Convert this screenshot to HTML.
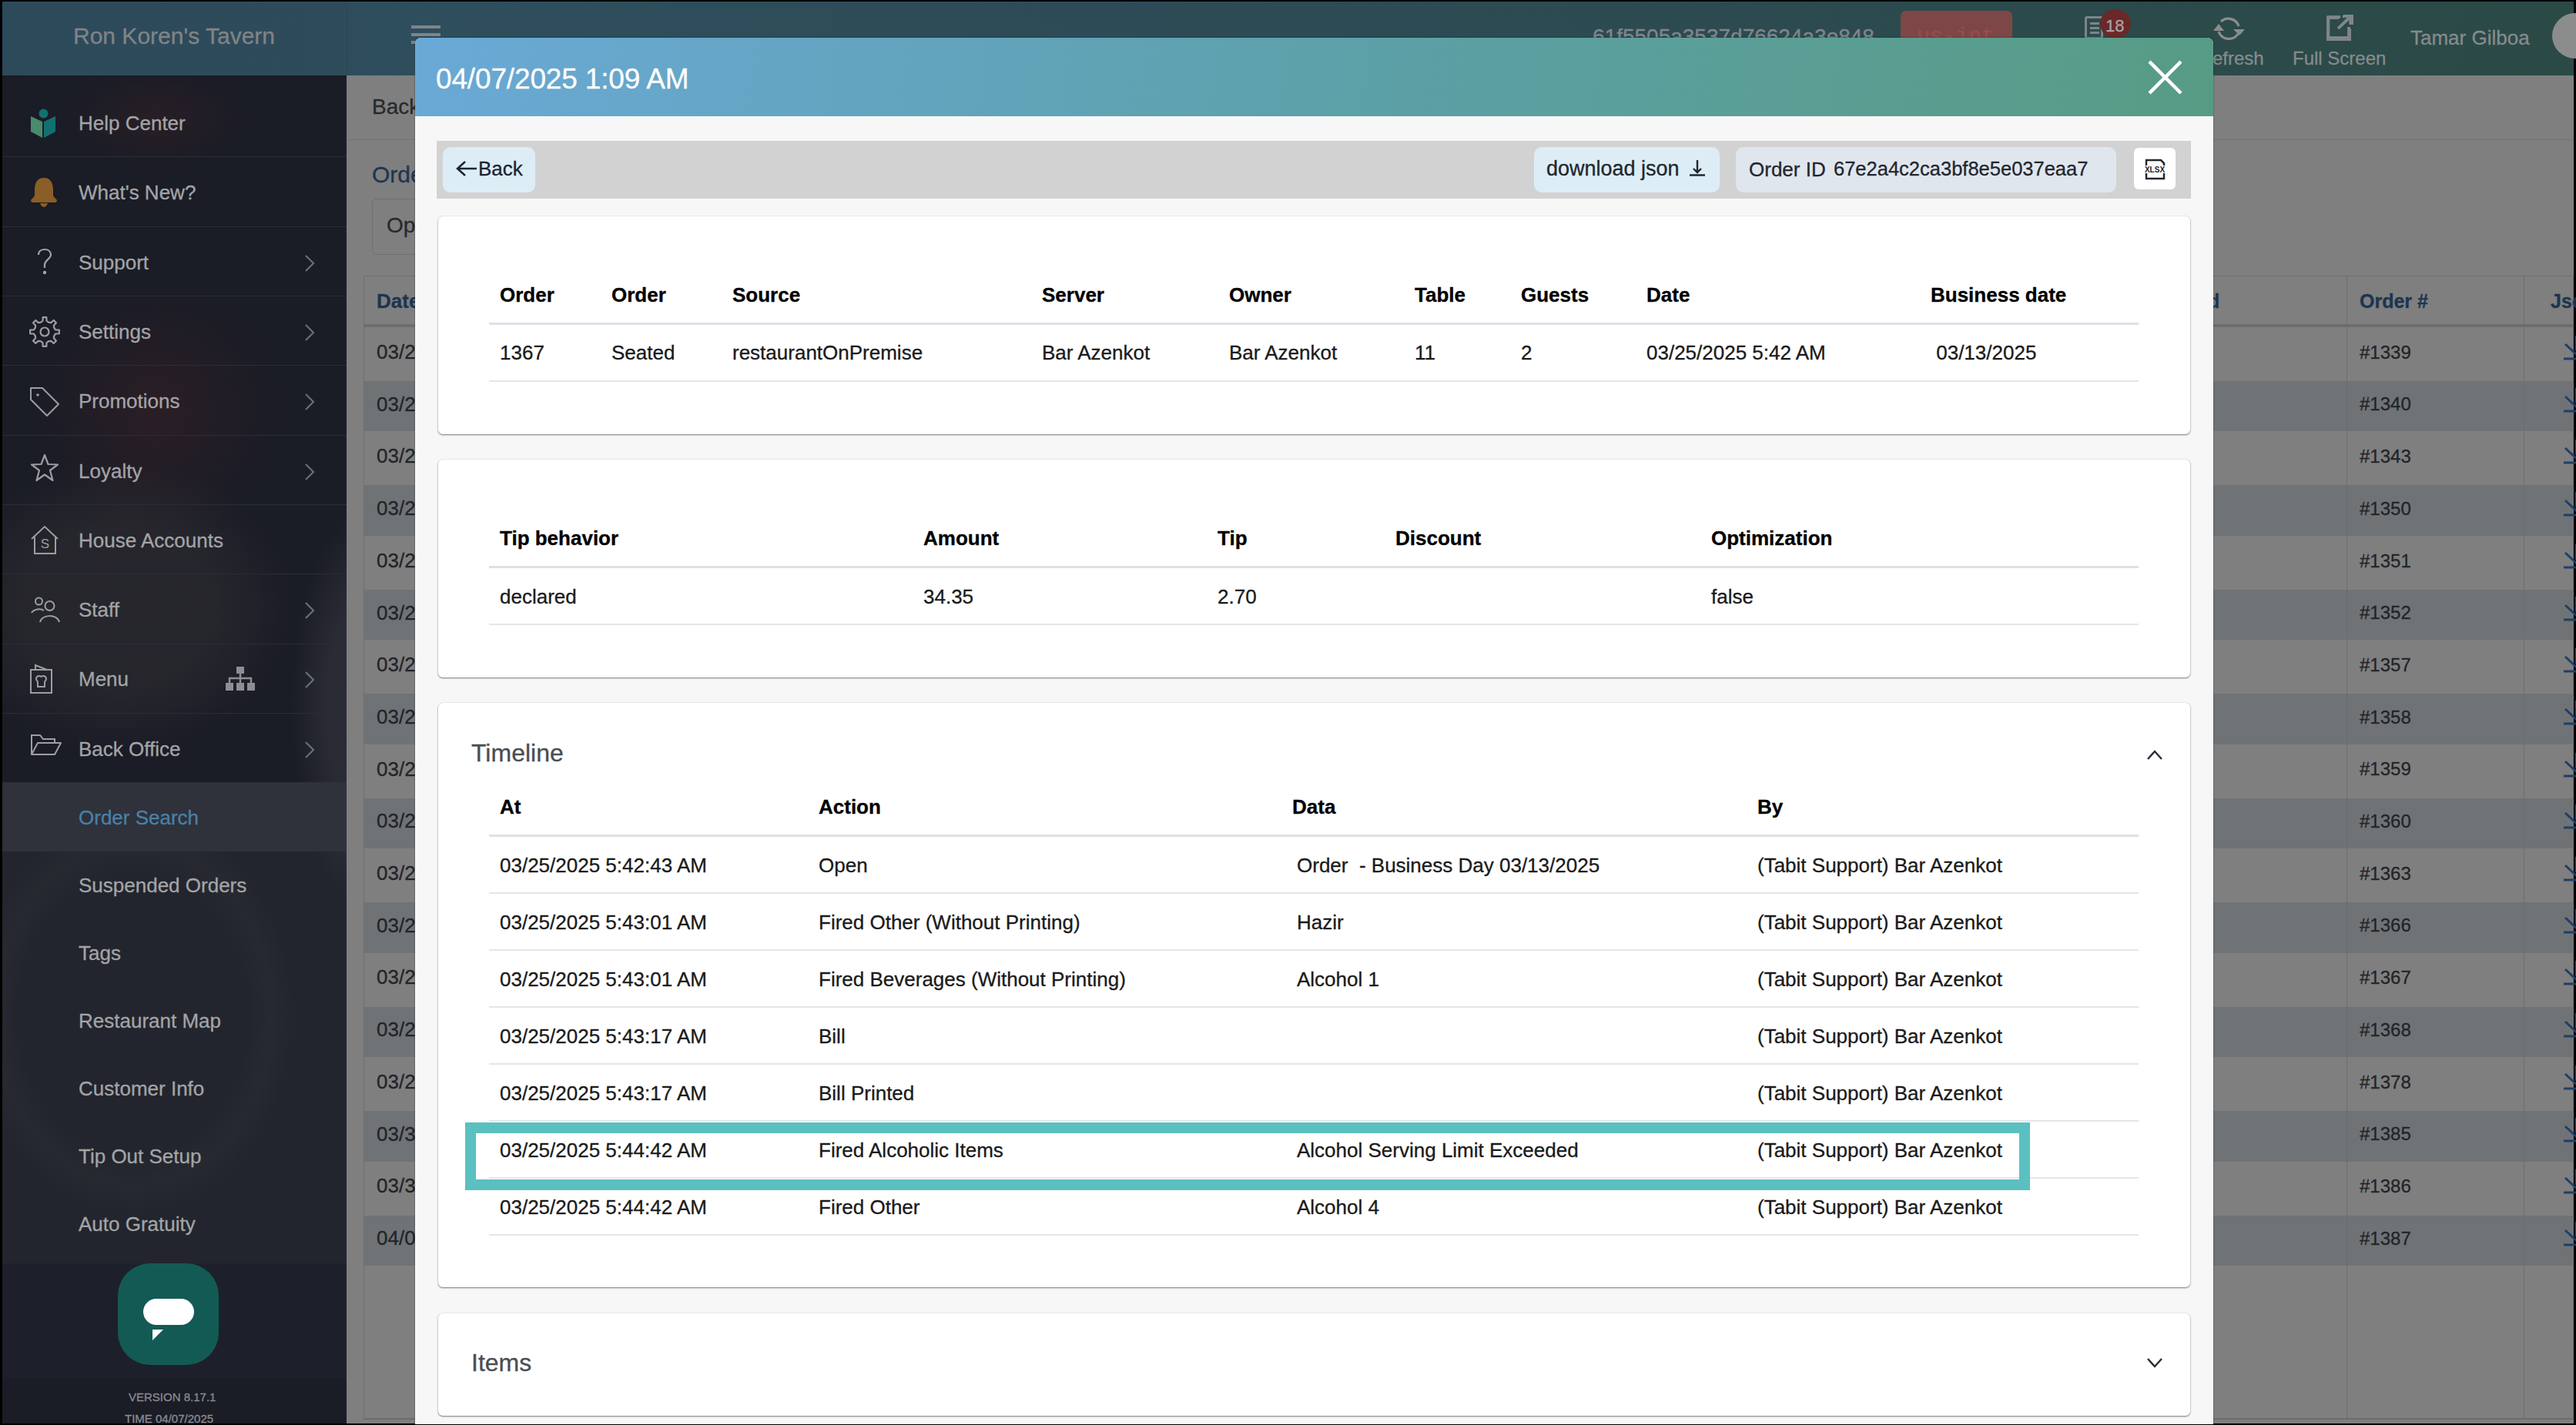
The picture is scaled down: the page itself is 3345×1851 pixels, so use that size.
<!DOCTYPE html>
<html><head><meta charset="utf-8"><style>
html,body{margin:0;padding:0;}
body{width:3345px;height:1851px;background:#000;position:relative;overflow:hidden;font-family:"Liberation Sans", sans-serif;}
.t{position:absolute;white-space:nowrap;line-height:1;-webkit-text-stroke:0.3px currentColor;}
.r{position:absolute;}
</style></head><body>
<div class="r" style="left:3px;top:2px;width:3339px;height:96px;background:linear-gradient(90deg,#2d4a5b 0%,#2e4b5c 13%,#2f4e5d 14%,#2d4b55 50%,#2b4a46 100%);"></div>
<div class="t" style="left:95px;top:32.1px;font-size:30px;color:#808486;font-weight:400;">Ron Koren's Tavern</div>
<div class="r" style="left:450px;top:2px;width:1px;height:96px;background:rgba(0,0,0,0.06);"></div>
<div class="r" style="left:534px;top:33px;width:38px;height:4px;background:#7d8488;"></div>
<div class="r" style="left:534px;top:43px;width:38px;height:4px;background:#7d8488;"></div>
<div class="r" style="left:534px;top:53px;width:38px;height:4px;background:#7d8488;"></div>
<div class="t" style="left:2068px;top:34.3px;font-size:28px;color:#80868a;font-weight:400;">61f5505a3537d76624a3e848</div>
<div class="r" style="left:2468px;top:14px;width:145px;height:60px;background:#7e4747;border-radius:7px"></div>
<div class="t" style="left:2489px;top:34.3px;font-size:28px;color:#9a4a4e;font-weight:400;letter-spacing:0px;font-family:Liberation Mono">us-int</div>
<div class="r" style="left:2707px;top:21px;width:24px;height:30px;background:transparent;border:3px solid #7d8488;border-radius:3px;box-sizing:border-box"></div>
<div class="r" style="left:2714px;top:29px;width:12px;height:3px;background:#7d8488;"></div>
<div class="r" style="left:2714px;top:35px;width:12px;height:3px;background:#7d8488;"></div>
<div class="r" style="left:2714px;top:41px;width:12px;height:3px;background:#7d8488;"></div>
<div class="r" style="left:2727px;top:12px;width:40px;height:38px;background:#6a2828;border-radius:50%"></div>
<div class="t" style="left:2734px;top:23.4px;font-size:22px;color:#a9a3a3;font-weight:400;">18</div>
<svg class="r" style="left:2870px;top:19px" width="50" height="40" viewBox="0 0 50 40"><path d="M14 9 A14 14 0 0 1 37 15" stroke="#8a8d8e" stroke-width="3.2" fill="none"/><path d="M36 25 A14 14 0 0 1 11 22" stroke="#8a8d8e" stroke-width="3.2" fill="none"/><path d="M30 19 L45 19 L38 27 Z" fill="#8a8d8e"/><path d="M4 21 L18 21 L11 12 Z" fill="#8a8d8e"/></svg>
<svg class="r" style="left:3018px;top:18px" width="40" height="36" viewBox="0 0 40 36"><path d="M21 4 H5.5 V31 H32 V17" stroke="#8a8d8e" stroke-width="3.5" fill="none"/><path d="M19 18 L33 4 M24 3.5 H34 V14" stroke="#8a8d8e" stroke-width="3" fill="none"/></svg>
<div class="t" style="left:2873px;top:63.7px;font-size:24px;color:#868b8d;font-weight:400;">efresh</div>
<svg class="r" style="left:3019px;top:18px" width="38" height="36" viewBox="0 0 38 36"><path d="M18 5 H4 V33 H32 V19" stroke="#7f8589" stroke-width="4" fill="none"/><path d="M17 19 L33 4 M24 3 H35 V14" stroke="#7f8589" stroke-width="4" fill="none"/></svg>
<div class="t" style="left:2977px;top:63.7px;font-size:24px;color:#868b8d;font-weight:400;">Full Screen</div>
<div class="t" style="left:3130px;top:35.5px;font-size:26px;color:#868b8d;font-weight:400;">Tamar Gilboa</div>
<div class="r" style="left:3314px;top:17px;width:60px;height:59px;background:#8b8d8d;border-radius:50%"></div>
<div class="r" style="left:3px;top:98px;width:447px;height:1751px;background:#1a1c26;"></div>
<div class="r" style="left:3px;top:1106px;width:447px;height:535px;background:#22252e;"></div>
<div class="r" style="left:3px;top:98px;width:447px;height:1752px;overflow:hidden"><div class="r" style="left:80px;top:-10px;width:240px;height:130px;border-radius:50%;background:radial-gradient(closest-side,rgba(75,35,35,0.30),rgba(75,35,35,0))"></div><div class="r" style="left:40px;top:270px;width:320px;height:330px;border-radius:50%;background:radial-gradient(closest-side,rgba(80,35,35,0.30),rgba(80,35,35,0))"></div><div class="r" style="left:-80px;top:500px;width:460px;height:380px;border-radius:50%;background:radial-gradient(closest-side,rgba(85,78,70,0.2) 55%,rgba(85,78,70,0))"></div><div class="r" style="left:375px;top:560px;width:200px;height:520px;border-radius:50%;background:radial-gradient(closest-side,rgba(100,100,110,0.20) 55%,rgba(100,100,110,0))"></div><div class="r" style="left:-40px;top:960px;width:420px;height:520px;border-radius:50%;background:radial-gradient(closest-side,rgba(0,0,0,0) 70%,rgba(120,110,100,0.06) 85%,rgba(0,0,0,0) 100%)"></div></div>
<div class="r" style="left:3px;top:1641px;width:447px;height:150px;background:#1d202a;"></div>
<div class="r" style="left:3px;top:1016px;width:447px;height:90px;background:#2f323a;"></div>
<div class="r" style="left:3px;top:203px;width:447px;height:1px;background:#2a2d36;"></div>
<div class="r" style="left:3px;top:294px;width:447px;height:1px;background:#2a2d36;"></div>
<div class="r" style="left:3px;top:384px;width:447px;height:1px;background:#2a2d36;"></div>
<div class="r" style="left:3px;top:474px;width:447px;height:1px;background:#2a2d36;"></div>
<div class="r" style="left:3px;top:565px;width:447px;height:1px;background:#2a2d36;"></div>
<div class="r" style="left:3px;top:655px;width:447px;height:1px;background:#2a2d36;"></div>
<div class="r" style="left:3px;top:745px;width:447px;height:1px;background:#2a2d36;"></div>
<div class="r" style="left:3px;top:836px;width:447px;height:1px;background:#2a2d36;"></div>
<div class="r" style="left:3px;top:926px;width:447px;height:1px;background:#2a2d36;"></div>
<div class="t" style="left:102px;top:147.0px;font-size:26px;color:#a3a4a6;font-weight:400;">Help Center</div>
<div class="t" style="left:102px;top:237.3px;font-size:26px;color:#a3a4a6;font-weight:400;">What's New?</div>
<div class="t" style="left:102px;top:327.6px;font-size:26px;color:#a3a4a6;font-weight:400;">Support</div>
<svg class="r" style="left:394px;top:328.6px" width="16" height="26" viewBox="0 0 16 26"><path d="M3 3 L13 13 L3 23" stroke="#66707c" stroke-width="2.2" fill="none"/></svg>
<div class="t" style="left:102px;top:417.9px;font-size:26px;color:#a3a4a6;font-weight:400;">Settings</div>
<svg class="r" style="left:394px;top:418.9px" width="16" height="26" viewBox="0 0 16 26"><path d="M3 3 L13 13 L3 23" stroke="#66707c" stroke-width="2.2" fill="none"/></svg>
<div class="t" style="left:102px;top:508.2px;font-size:26px;color:#a3a4a6;font-weight:400;">Promotions</div>
<svg class="r" style="left:394px;top:509.2px" width="16" height="26" viewBox="0 0 16 26"><path d="M3 3 L13 13 L3 23" stroke="#66707c" stroke-width="2.2" fill="none"/></svg>
<div class="t" style="left:102px;top:598.5px;font-size:26px;color:#a3a4a6;font-weight:400;">Loyalty</div>
<svg class="r" style="left:394px;top:599.5px" width="16" height="26" viewBox="0 0 16 26"><path d="M3 3 L13 13 L3 23" stroke="#66707c" stroke-width="2.2" fill="none"/></svg>
<div class="t" style="left:102px;top:688.8px;font-size:26px;color:#a3a4a6;font-weight:400;">House Accounts</div>
<div class="t" style="left:102px;top:779.1px;font-size:26px;color:#a3a4a6;font-weight:400;">Staff</div>
<svg class="r" style="left:394px;top:780.1px" width="16" height="26" viewBox="0 0 16 26"><path d="M3 3 L13 13 L3 23" stroke="#66707c" stroke-width="2.2" fill="none"/></svg>
<div class="t" style="left:102px;top:869.4px;font-size:26px;color:#a3a4a6;font-weight:400;">Menu</div>
<svg class="r" style="left:394px;top:870.4px" width="16" height="26" viewBox="0 0 16 26"><path d="M3 3 L13 13 L3 23" stroke="#66707c" stroke-width="2.2" fill="none"/></svg>
<div class="t" style="left:102px;top:959.7px;font-size:26px;color:#a3a4a6;font-weight:400;">Back Office</div>
<svg class="r" style="left:394px;top:960.7px" width="16" height="26" viewBox="0 0 16 26"><path d="M3 3 L13 13 L3 23" stroke="#66707c" stroke-width="2.2" fill="none"/></svg>
<svg class="r" style="left:38px;top:140px" width="36" height="42" viewBox="0 0 36 42"><circle cx="18.5" cy="7.5" r="6" fill="#137070"/><path d="M2 11 L17 18 V39 L2 31 Z" fill="#4a8a6f"/><path d="M19 18 L34 11 V31 L19 39 Z" fill="#137070"/></svg>
<svg class="r" style="left:38px;top:229px" width="38" height="42" viewBox="0 0 38 42"><path d="M19 2 C10 2 7 9 7 18 V24 C7 27 3 29 2 31 C2 33 3 34 5 34 H33 C35 34 36 33 36 31 C35 29 31 27 31 24 V18 C31 9 28 2 19 2 Z" fill="#8a5e26"/><path d="M14 35 H24 C23 38 21 40 19 40 C17 40 15 38 14 35 Z" fill="#8a5e26"/></svg>
<svg class="r" style="left:46px;top:322px" width="24" height="36" viewBox="0 0 24 36"><path d="M4 9 C4 4 8 2 12 2 C17 2 20 5 20 9 C20 14 12 16 12 22 V26" stroke="#a3a4a6" stroke-width="2.2" fill="none"/><circle cx="12" cy="32" r="2.2" fill="#a3a4a6"/></svg>
<svg class="r" style="left:38px;top:411px" width="40" height="40" viewBox="0 0 40 40"><polygon points="32.80,15.72 34.28,17.48 38.86,17.68 38.86,22.32 34.28,22.52 32.80,24.28 32.08,26.02 31.88,28.32 34.97,31.70 31.70,34.97 28.32,31.88 26.02,32.08 24.28,32.80 22.52,34.28 22.32,38.86 17.68,38.86 17.48,34.28 15.72,32.80 13.98,32.08 11.68,31.88 8.30,34.97 5.03,31.70 8.12,28.32 7.92,26.02 7.20,24.28 5.72,22.52 1.14,22.32 1.14,17.68 5.72,17.48 7.20,15.72 7.92,13.98 8.12,11.68 5.03,8.30 8.30,5.03 11.68,8.12 13.98,7.92 15.72,7.20 17.48,5.72 17.68,1.14 22.32,1.14 22.52,5.72 24.28,7.20 26.02,7.92 28.32,8.12 31.70,5.03 34.97,8.30 31.88,11.68 32.08,13.98" stroke="#9c9ea2" stroke-width="2.2" fill="none" stroke-linejoin="round"/><circle cx="20" cy="20" r="5.5" stroke="#9c9ea2" stroke-width="2.2" fill="none"/></svg>
<svg class="r" style="left:38px;top:501px" width="40" height="42" viewBox="0 0 40 42"><path d="M2 3 H17 L38 24 L23 39 L2 18 Z" stroke="#9c9ea2" stroke-width="2" fill="none" stroke-linejoin="round"/><circle cx="11" cy="12" r="1.8" fill="#9c9ea2"/></svg>
<svg class="r" style="left:38px;top:589px" width="40" height="38" viewBox="0 0 40 38"><polygon points="20,2 24.5,14 37,14.5 27,22 30.5,35 20,27.5 9.5,35 13,22 3,14.5 15.5,14" stroke="#9c9ea2" stroke-width="2.2" fill="none" stroke-linejoin="round"/></svg>
<svg class="r" style="left:38px;top:681px" width="42" height="42" viewBox="0 0 42 42"><path d="M3 19 L20 3 L37 19" stroke="#9c9ea2" stroke-width="2" fill="none"/><path d="M7 16 V38 H34 V16" stroke="#9c9ea2" stroke-width="2" fill="none"/><text x="20.5" y="31" font-size="17" font-family="Liberation Sans" text-anchor="middle" fill="#9c9ea2">S</text></svg>
<svg class="r" style="left:40px;top:774px" width="40" height="38" viewBox="0 0 40 38"><circle cx="10.5" cy="7" r="4.5" stroke="#9c9ea2" stroke-width="2" fill="none"/><circle cx="24.5" cy="13" r="6" stroke="#9c9ea2" stroke-width="2" fill="none"/><path d="M1 22 C4 17 13 16 17 19" stroke="#9c9ea2" stroke-width="2" fill="none"/><path d="M12 34 C14 24 34 23 37 34" stroke="#9c9ea2" stroke-width="2" fill="none"/></svg>
<svg class="r" style="left:37px;top:862px" width="34" height="42" viewBox="0 0 34 42"><path d="M3 8 H30 V38 H3 Z" stroke="#9c9ea2" stroke-width="2" fill="none"/><path d="M9 8 V2 L24 8" stroke="#9c9ea2" stroke-width="2" fill="none"/><path d="M10 20 C10 16 14 15 16.5 17 C19 15 23 16 23 20 C23 22 21 23 21 24 V30 H12 V24 C12 23 10 22 10 20 Z" stroke="#9c9ea2" stroke-width="2" fill="none"/></svg>
<svg class="r" style="left:38px;top:952px" width="44" height="32" viewBox="0 0 44 32"><path d="M3 28 V3 H14 L18 8 H33 V13" stroke="#9c9ea2" stroke-width="2" fill="none"/><path d="M3 28 L11 13 H41 L33 28 Z" stroke="#9c9ea2" stroke-width="2" fill="none" stroke-linejoin="round"/></svg>
<svg class="r" style="left:292px;top:865px" width="40" height="34" viewBox="0 0 40 34"><rect x="15" y="1" width="10" height="9" fill="#8d8f93"/><path d="M20 10 V16 M6 22 V16 H34 V22 M20 16 V22" stroke="#8d8f93" stroke-width="2.5" fill="none"/><rect x="1" y="22" width="10" height="10" fill="#8d8f93"/><rect x="15" y="22" width="10" height="10" fill="#8d8f93"/><rect x="29" y="22" width="10" height="10" fill="#8d8f93"/></svg>
<div class="t" style="left:102px;top:1049.0px;font-size:26px;color:#4a80a8;font-weight:400;">Order Search</div>
<div class="t" style="left:102px;top:1137.0px;font-size:26px;color:#a3a4a6;font-weight:400;">Suspended Orders</div>
<div class="t" style="left:102px;top:1225.0px;font-size:26px;color:#a3a4a6;font-weight:400;">Tags</div>
<div class="t" style="left:102px;top:1313.0px;font-size:26px;color:#a3a4a6;font-weight:400;">Restaurant Map</div>
<div class="t" style="left:102px;top:1401.0px;font-size:26px;color:#a3a4a6;font-weight:400;">Customer Info</div>
<div class="t" style="left:102px;top:1489.0px;font-size:26px;color:#a3a4a6;font-weight:400;">Tip Out Setup</div>
<div class="t" style="left:102px;top:1577.0px;font-size:26px;color:#a3a4a6;font-weight:400;">Auto Gratuity</div>
<div class="r" style="left:153px;top:1641px;width:131px;height:132px;background:#135a55;border-radius:42px"></div>
<div class="r" style="left:186px;top:1687px;width:66px;height:34px;background:#fff;border-radius:17px"></div>
<svg class="r" style="left:198px;top:1727px" width="14" height="14" viewBox="0 0 14 14"><path d="M0 0 H14 L0 14 Z" fill="#fff"/></svg>
<div class="t" style="left:167px;top:1807.3px;font-size:15px;color:#8a8c90;font-weight:400;">VERSION 8.17.1</div>
<div class="t" style="left:162px;top:1835.3px;font-size:15px;color:#8a8c90;font-weight:400;">TIME 04/07/2025</div>
<div class="r" style="left:450px;top:98px;width:2892px;height:1751px;background:#7f7f7f;"></div>
<div class="r" style="left:450px;top:181px;width:2892px;height:1px;background:#727272;"></div>
<div class="t" style="left:483px;top:125.3px;font-size:28px;color:#262a2e;font-weight:400;">Back</div>
<div class="t" style="left:483px;top:211.6px;font-size:30px;color:#1e3550;font-weight:400;">Order Search</div>
<div class="r" style="left:483px;top:258px;width:300px;height:71px;background:transparent;border:1px solid #6f6f6f;border-radius:6px"></div>
<div class="t" style="left:502px;top:279.3px;font-size:28px;color:#262a2e;font-weight:400;">Open</div>
<div class="r" style="left:472px;top:358px;width:2870px;height:1486px;background:transparent;border:1px solid #707070;border-bottom:2px solid #6d6d6d;box-sizing:border-box"></div>
<div class="r" style="left:472px;top:421px;width:2870px;height:4px;background:#6d6d6d;"></div>
<div class="r" style="left:473px;top:494.5px;width:2869px;height:65.5px;background:#6f7376"></div>
<div class="r" style="left:473px;top:630.0px;width:2869px;height:65.5px;background:#6f7376"></div>
<div class="r" style="left:473px;top:765.5px;width:2869px;height:65.5px;background:#6f7376"></div>
<div class="r" style="left:473px;top:901.0px;width:2869px;height:65.5px;background:#6f7376"></div>
<div class="r" style="left:473px;top:1036.5px;width:2869px;height:65.5px;background:#6f7376"></div>
<div class="r" style="left:473px;top:1172.0px;width:2869px;height:65.5px;background:#6f7376"></div>
<div class="r" style="left:473px;top:1307.5px;width:2869px;height:65.5px;background:#6f7376"></div>
<div class="r" style="left:473px;top:1443.0px;width:2869px;height:65.5px;background:#6f7376"></div>
<div class="r" style="left:473px;top:1578.5px;width:2869px;height:65.5px;background:#6f7376"></div>
<div class="t" style="left:489px;top:377.6px;font-size:26px;color:#1c3550;font-weight:700;">Date</div>
<div class="t" style="left:489px;top:444.0px;font-size:26px;color:#222428;font-weight:400;">03/25/2025</div>
<div class="t" style="left:3064px;top:445.7px;font-size:24px;color:#222428;font-weight:400;">#1339</div>
<svg class="r" style="left:3326px;top:436.0px" width="30" height="36" viewBox="0 0 30 36"><path d="M19 0 V20 M5 11 L19 24 L33 11 M3 30 H35" stroke="#1f3f66" stroke-width="3" fill="none"/></svg>
<div class="t" style="left:489px;top:511.7px;font-size:26px;color:#222428;font-weight:400;">03/25/2025</div>
<div class="t" style="left:3064px;top:513.4px;font-size:24px;color:#222428;font-weight:400;">#1340</div>
<svg class="r" style="left:3326px;top:503.7px" width="30" height="36" viewBox="0 0 30 36"><path d="M19 0 V20 M5 11 L19 24 L33 11 M3 30 H35" stroke="#1f3f66" stroke-width="3" fill="none"/></svg>
<div class="t" style="left:489px;top:579.4px;font-size:26px;color:#222428;font-weight:400;">03/25/2025</div>
<div class="t" style="left:3064px;top:581.1px;font-size:24px;color:#222428;font-weight:400;">#1343</div>
<svg class="r" style="left:3326px;top:571.4px" width="30" height="36" viewBox="0 0 30 36"><path d="M19 0 V20 M5 11 L19 24 L33 11 M3 30 H35" stroke="#1f3f66" stroke-width="3" fill="none"/></svg>
<div class="t" style="left:489px;top:647.1px;font-size:26px;color:#222428;font-weight:400;">03/25/2025</div>
<div class="t" style="left:3064px;top:648.8px;font-size:24px;color:#222428;font-weight:400;">#1350</div>
<svg class="r" style="left:3326px;top:639.1px" width="30" height="36" viewBox="0 0 30 36"><path d="M19 0 V20 M5 11 L19 24 L33 11 M3 30 H35" stroke="#1f3f66" stroke-width="3" fill="none"/></svg>
<div class="t" style="left:489px;top:714.8px;font-size:26px;color:#222428;font-weight:400;">03/25/2025</div>
<div class="t" style="left:3064px;top:716.5px;font-size:24px;color:#222428;font-weight:400;">#1351</div>
<svg class="r" style="left:3326px;top:706.8px" width="30" height="36" viewBox="0 0 30 36"><path d="M19 0 V20 M5 11 L19 24 L33 11 M3 30 H35" stroke="#1f3f66" stroke-width="3" fill="none"/></svg>
<div class="t" style="left:489px;top:782.5px;font-size:26px;color:#222428;font-weight:400;">03/25/2025</div>
<div class="t" style="left:3064px;top:784.2px;font-size:24px;color:#222428;font-weight:400;">#1352</div>
<svg class="r" style="left:3326px;top:774.5px" width="30" height="36" viewBox="0 0 30 36"><path d="M19 0 V20 M5 11 L19 24 L33 11 M3 30 H35" stroke="#1f3f66" stroke-width="3" fill="none"/></svg>
<div class="t" style="left:489px;top:850.2px;font-size:26px;color:#222428;font-weight:400;">03/25/2025</div>
<div class="t" style="left:3064px;top:851.9px;font-size:24px;color:#222428;font-weight:400;">#1357</div>
<svg class="r" style="left:3326px;top:842.2px" width="30" height="36" viewBox="0 0 30 36"><path d="M19 0 V20 M5 11 L19 24 L33 11 M3 30 H35" stroke="#1f3f66" stroke-width="3" fill="none"/></svg>
<div class="t" style="left:489px;top:917.9px;font-size:26px;color:#222428;font-weight:400;">03/25/2025</div>
<div class="t" style="left:3064px;top:919.6px;font-size:24px;color:#222428;font-weight:400;">#1358</div>
<svg class="r" style="left:3326px;top:909.9px" width="30" height="36" viewBox="0 0 30 36"><path d="M19 0 V20 M5 11 L19 24 L33 11 M3 30 H35" stroke="#1f3f66" stroke-width="3" fill="none"/></svg>
<div class="t" style="left:489px;top:985.6px;font-size:26px;color:#222428;font-weight:400;">03/25/2025</div>
<div class="t" style="left:3064px;top:987.3px;font-size:24px;color:#222428;font-weight:400;">#1359</div>
<svg class="r" style="left:3326px;top:977.6px" width="30" height="36" viewBox="0 0 30 36"><path d="M19 0 V20 M5 11 L19 24 L33 11 M3 30 H35" stroke="#1f3f66" stroke-width="3" fill="none"/></svg>
<div class="t" style="left:489px;top:1053.3px;font-size:26px;color:#222428;font-weight:400;">03/25/2025</div>
<div class="t" style="left:3064px;top:1055.0px;font-size:24px;color:#222428;font-weight:400;">#1360</div>
<svg class="r" style="left:3326px;top:1045.3px" width="30" height="36" viewBox="0 0 30 36"><path d="M19 0 V20 M5 11 L19 24 L33 11 M3 30 H35" stroke="#1f3f66" stroke-width="3" fill="none"/></svg>
<div class="t" style="left:489px;top:1121.0px;font-size:26px;color:#222428;font-weight:400;">03/25/2025</div>
<div class="t" style="left:3064px;top:1122.7px;font-size:24px;color:#222428;font-weight:400;">#1363</div>
<svg class="r" style="left:3326px;top:1113.0px" width="30" height="36" viewBox="0 0 30 36"><path d="M19 0 V20 M5 11 L19 24 L33 11 M3 30 H35" stroke="#1f3f66" stroke-width="3" fill="none"/></svg>
<div class="t" style="left:489px;top:1188.7px;font-size:26px;color:#222428;font-weight:400;">03/25/2025</div>
<div class="t" style="left:3064px;top:1190.4px;font-size:24px;color:#222428;font-weight:400;">#1366</div>
<svg class="r" style="left:3326px;top:1180.7px" width="30" height="36" viewBox="0 0 30 36"><path d="M19 0 V20 M5 11 L19 24 L33 11 M3 30 H35" stroke="#1f3f66" stroke-width="3" fill="none"/></svg>
<div class="t" style="left:489px;top:1256.4px;font-size:26px;color:#222428;font-weight:400;">03/25/2025</div>
<div class="t" style="left:3064px;top:1258.1px;font-size:24px;color:#222428;font-weight:400;">#1367</div>
<svg class="r" style="left:3326px;top:1248.4px" width="30" height="36" viewBox="0 0 30 36"><path d="M19 0 V20 M5 11 L19 24 L33 11 M3 30 H35" stroke="#1f3f66" stroke-width="3" fill="none"/></svg>
<div class="t" style="left:489px;top:1324.1px;font-size:26px;color:#222428;font-weight:400;">03/25/2025</div>
<div class="t" style="left:3064px;top:1325.8px;font-size:24px;color:#222428;font-weight:400;">#1368</div>
<svg class="r" style="left:3326px;top:1316.1px" width="30" height="36" viewBox="0 0 30 36"><path d="M19 0 V20 M5 11 L19 24 L33 11 M3 30 H35" stroke="#1f3f66" stroke-width="3" fill="none"/></svg>
<div class="t" style="left:489px;top:1391.8px;font-size:26px;color:#222428;font-weight:400;">03/25/2025</div>
<div class="t" style="left:3064px;top:1393.5px;font-size:24px;color:#222428;font-weight:400;">#1378</div>
<svg class="r" style="left:3326px;top:1383.8px" width="30" height="36" viewBox="0 0 30 36"><path d="M19 0 V20 M5 11 L19 24 L33 11 M3 30 H35" stroke="#1f3f66" stroke-width="3" fill="none"/></svg>
<div class="t" style="left:489px;top:1459.5px;font-size:26px;color:#222428;font-weight:400;">03/35/2025</div>
<div class="t" style="left:3064px;top:1461.2px;font-size:24px;color:#222428;font-weight:400;">#1385</div>
<svg class="r" style="left:3326px;top:1451.5px" width="30" height="36" viewBox="0 0 30 36"><path d="M19 0 V20 M5 11 L19 24 L33 11 M3 30 H35" stroke="#1f3f66" stroke-width="3" fill="none"/></svg>
<div class="t" style="left:489px;top:1527.2px;font-size:26px;color:#222428;font-weight:400;">03/35/2025</div>
<div class="t" style="left:3064px;top:1528.9px;font-size:24px;color:#222428;font-weight:400;">#1386</div>
<svg class="r" style="left:3326px;top:1519.2px" width="30" height="36" viewBox="0 0 30 36"><path d="M19 0 V20 M5 11 L19 24 L33 11 M3 30 H35" stroke="#1f3f66" stroke-width="3" fill="none"/></svg>
<div class="t" style="left:489px;top:1594.9px;font-size:26px;color:#222428;font-weight:400;">04/05/2025</div>
<div class="t" style="left:3064px;top:1596.6px;font-size:24px;color:#222428;font-weight:400;">#1387</div>
<svg class="r" style="left:3326px;top:1586.9px" width="30" height="36" viewBox="0 0 30 36"><path d="M19 0 V20 M5 11 L19 24 L33 11 M3 30 H35" stroke="#1f3f66" stroke-width="3" fill="none"/></svg>
<div class="r" style="left:3047px;top:358px;width:1px;height:1486px;background:#6d6d6d;"></div>
<div class="r" style="left:3277px;top:358px;width:1px;height:1486px;background:#6d6d6d;"></div>
<div class="t" style="left:3064px;top:378.8px;font-size:25px;color:#1c3550;font-weight:700;">Order #</div>
<div class="t" style="left:3312px;top:378.8px;font-size:25px;color:#1c3550;font-weight:700;">Json</div>
<div class="t" style="left:2785px;top:378.8px;font-size:25px;color:#1c3550;font-weight:700;">Order Id</div>
<div class="r" style="left:539px;top:49px;width:2335px;height:1810px;background:#f7f7f7;border-radius:8px 8px 0 0;overflow:hidden;box-shadow:0 0 2px rgba(0,0,0,0.6)">
<div class="r" style="left:0;top:0;width:2335px;height:102px;background:linear-gradient(100deg,#6aa9d6 0%,#62a4bc 30%,#5ca0a6 55%,#5a9e94 78%,#579b85 100%)"></div>
</div>
<div class="t" style="left:566px;top:83.7px;font-size:37px;color:#ffffff;font-weight:400;letter-spacing:-0.15px">04/07/2025 1:09 AM</div>
<svg class="r" style="left:2788px;top:77px" width="47" height="47" viewBox="0 0 47 47"><path d="M3 3 L44 44 M44 3 L3 44" stroke="#fff" stroke-width="4.5" fill="none"/></svg>
<div class="r" style="left:567px;top:183px;width:2278px;height:75px;background:#d3d2d3;"></div>
<div class="r" style="left:575px;top:191px;width:120px;height:59px;background:#ddedf6;border-radius:10px"></div>
<svg class="r" style="left:591px;top:207px" width="30" height="24" viewBox="0 0 30 24"><path d="M28 12 H4 M13 3 L3 12 L13 21" stroke="#1c2434" stroke-width="2.5" fill="none"/></svg>
<div class="t" style="left:621px;top:206.0px;font-size:26px;color:#1c2434;font-weight:400;">Back</div>
<div class="r" style="left:1992px;top:191px;width:241px;height:59px;background:#ddedf6;border-radius:10px"></div>
<div class="t" style="left:2008px;top:206.1px;font-size:27px;color:#22262e;font-weight:400;">download json</div>
<svg class="r" style="left:2192px;top:206px" width="24" height="26" viewBox="0 0 24 26"><path d="M12 2 V18 M7 13 L12 18 L17 13 M2 21.5 H22" stroke="#22262e" stroke-width="2.4" fill="none"/></svg>
<div class="r" style="left:2254px;top:191px;width:494px;height:59px;background:#e0e6ee;border-radius:10px"></div>
<div class="t" style="left:2271px;top:207.0px;font-size:26px;color:#22262e;font-weight:400;">Order ID</div>
<div class="t" style="left:2381px;top:207.4px;font-size:25.5px;color:#22262e;font-weight:400;">67e2a4c2ca3bf8e5e037eaa7</div>
<div class="r" style="left:2771px;top:192px;width:54px;height:54px;background:#ffffff;border-radius:6px"></div>
<svg class="r" style="left:2780px;top:203px" width="36" height="34" viewBox="0 0 36 34"><path d="M7 12 V5 H26 L30 9 V12 M7 22 V29 H30 V22" stroke="#22262e" stroke-width="2.5" fill="none"/><text x="18" y="21" font-size="10" font-family="Liberation Sans" font-weight="700" text-anchor="middle" fill="#22262e">XLSX</text></svg>
<div class="r" style="left:569px;top:281px;width:2275px;height:283px;background:#ffffff;border-radius:6px;box-shadow:0 1px 2px rgba(0,0,0,0.5),0 0 2px rgba(0,0,0,0.12)"></div>
<div class="r" style="left:569px;top:597px;width:2275px;height:283px;background:#ffffff;border-radius:6px;box-shadow:0 1px 2px rgba(0,0,0,0.5),0 0 2px rgba(0,0,0,0.12)"></div>
<div class="r" style="left:569px;top:913px;width:2275px;height:759px;background:#ffffff;border-radius:6px;box-shadow:0 1px 2px rgba(0,0,0,0.5),0 0 2px rgba(0,0,0,0.12)"></div>
<div class="r" style="left:569px;top:1706px;width:2275px;height:133px;background:#ffffff;border-radius:6px;box-shadow:0 1px 2px rgba(0,0,0,0.5),0 0 2px rgba(0,0,0,0.12)"></div>
<div class="t" style="left:649px;top:370.0px;font-size:26px;color:#000;font-weight:700;">Order</div>
<div class="t" style="left:649px;top:445.0px;font-size:26px;color:#1a1a1a;font-weight:400;">1367</div>
<div class="t" style="left:794px;top:370.0px;font-size:26px;color:#000;font-weight:700;">Order</div>
<div class="t" style="left:794px;top:445.0px;font-size:26px;color:#1a1a1a;font-weight:400;">Seated</div>
<div class="t" style="left:951px;top:370.0px;font-size:26px;color:#000;font-weight:700;">Source</div>
<div class="t" style="left:951px;top:445.0px;font-size:26px;color:#1a1a1a;font-weight:400;">restaurantOnPremise</div>
<div class="t" style="left:1353px;top:370.0px;font-size:26px;color:#000;font-weight:700;">Server</div>
<div class="t" style="left:1353px;top:445.0px;font-size:26px;color:#1a1a1a;font-weight:400;">Bar Azenkot</div>
<div class="t" style="left:1596px;top:370.0px;font-size:26px;color:#000;font-weight:700;">Owner</div>
<div class="t" style="left:1596px;top:445.0px;font-size:26px;color:#1a1a1a;font-weight:400;">Bar Azenkot</div>
<div class="t" style="left:1837px;top:370.0px;font-size:26px;color:#000;font-weight:700;">Table</div>
<div class="t" style="left:1837px;top:445.0px;font-size:26px;color:#1a1a1a;font-weight:400;">11</div>
<div class="t" style="left:1975px;top:370.0px;font-size:26px;color:#000;font-weight:700;">Guests</div>
<div class="t" style="left:1975px;top:445.0px;font-size:26px;color:#1a1a1a;font-weight:400;">2</div>
<div class="t" style="left:2138px;top:370.0px;font-size:26px;color:#000;font-weight:700;">Date</div>
<div class="t" style="left:2138px;top:445.0px;font-size:26px;color:#1a1a1a;font-weight:400;">03/25/2025 5:42 AM</div>
<div class="t" style="left:2507px;top:370.0px;font-size:26px;color:#000;font-weight:700;">Business date</div>
<div class="t" style="left:2507px;top:445.0px;font-size:26px;color:#1a1a1a;font-weight:400;">&nbsp;03/13/2025</div>
<div class="r" style="left:635px;top:419px;width:2142px;height:3px;background:#dde1e6;"></div>
<div class="r" style="left:635px;top:494px;width:2142px;height:2px;background:#e3e6ea;"></div>
<div class="t" style="left:649px;top:686.0px;font-size:26px;color:#000;font-weight:700;">Tip behavior</div>
<div class="t" style="left:649px;top:762.0px;font-size:26px;color:#1a1a1a;font-weight:400;">declared</div>
<div class="t" style="left:1199px;top:686.0px;font-size:26px;color:#000;font-weight:700;">Amount</div>
<div class="t" style="left:1199px;top:762.0px;font-size:26px;color:#1a1a1a;font-weight:400;">34.35</div>
<div class="t" style="left:1581px;top:686.0px;font-size:26px;color:#000;font-weight:700;">Tip</div>
<div class="t" style="left:1581px;top:762.0px;font-size:26px;color:#1a1a1a;font-weight:400;">2.70</div>
<div class="t" style="left:1812px;top:686.0px;font-size:26px;color:#000;font-weight:700;">Discount</div>
<div class="t" style="left:1812px;top:762.0px;font-size:26px;color:#1a1a1a;font-weight:400;"></div>
<div class="t" style="left:2222px;top:686.0px;font-size:26px;color:#000;font-weight:700;">Optimization</div>
<div class="t" style="left:2222px;top:762.0px;font-size:26px;color:#1a1a1a;font-weight:400;">false</div>
<div class="r" style="left:635px;top:735px;width:2142px;height:3px;background:#dde1e6;"></div>
<div class="r" style="left:635px;top:810px;width:2142px;height:2px;background:#e3e6ea;"></div>
<div class="t" style="left:612px;top:961.9px;font-size:32px;color:#4a4d52;font-weight:400;">Timeline</div>
<svg class="r" style="left:2786px;top:971px" width="24" height="18" viewBox="0 0 24 18"><path d="M3 15 L12 5 L21 15" stroke="#2a2e36" stroke-width="2.5" fill="none"/></svg>
<div class="t" style="left:649px;top:1035.0px;font-size:26px;color:#000;font-weight:700;">At</div>
<div class="t" style="left:1063px;top:1035.0px;font-size:26px;color:#000;font-weight:700;">Action</div>
<div class="t" style="left:1678px;top:1035.0px;font-size:26px;color:#000;font-weight:700;">Data</div>
<div class="t" style="left:2282px;top:1035.0px;font-size:26px;color:#000;font-weight:700;">By</div>
<div class="r" style="left:635px;top:1084px;width:2142px;height:3px;background:#dde1e6;"></div>
<div class="t" style="left:649px;top:1111.0px;font-size:26px;color:#1a1a1a;font-weight:400;">03/25/2025 5:42:43 AM</div>
<div class="t" style="left:1063px;top:1111.0px;font-size:26px;color:#1a1a1a;font-weight:400;">Open</div>
<div class="t" style="left:1684px;top:1111.0px;font-size:26px;color:#1a1a1a;font-weight:400;">Order&nbsp; - Business Day 03/13/2025</div>
<div class="t" style="left:2282px;top:1111.0px;font-size:26px;color:#1a1a1a;font-weight:400;">(Tabit Support) Bar Azenkot</div>
<div class="r" style="left:635px;top:1159px;width:2142px;height:2px;background:#e3e6ea;"></div>
<div class="t" style="left:649px;top:1185.0px;font-size:26px;color:#1a1a1a;font-weight:400;">03/25/2025 5:43:01 AM</div>
<div class="t" style="left:1063px;top:1185.0px;font-size:26px;color:#1a1a1a;font-weight:400;">Fired Other (Without Printing)</div>
<div class="t" style="left:1684px;top:1185.0px;font-size:26px;color:#1a1a1a;font-weight:400;">Hazir</div>
<div class="t" style="left:2282px;top:1185.0px;font-size:26px;color:#1a1a1a;font-weight:400;">(Tabit Support) Bar Azenkot</div>
<div class="r" style="left:635px;top:1233px;width:2142px;height:2px;background:#e3e6ea;"></div>
<div class="t" style="left:649px;top:1259.0px;font-size:26px;color:#1a1a1a;font-weight:400;">03/25/2025 5:43:01 AM</div>
<div class="t" style="left:1063px;top:1259.0px;font-size:26px;color:#1a1a1a;font-weight:400;">Fired Beverages (Without Printing)</div>
<div class="t" style="left:1684px;top:1259.0px;font-size:26px;color:#1a1a1a;font-weight:400;">Alcohol 1</div>
<div class="t" style="left:2282px;top:1259.0px;font-size:26px;color:#1a1a1a;font-weight:400;">(Tabit Support) Bar Azenkot</div>
<div class="r" style="left:635px;top:1307px;width:2142px;height:2px;background:#e3e6ea;"></div>
<div class="t" style="left:649px;top:1333.0px;font-size:26px;color:#1a1a1a;font-weight:400;">03/25/2025 5:43:17 AM</div>
<div class="t" style="left:1063px;top:1333.0px;font-size:26px;color:#1a1a1a;font-weight:400;">Bill</div>
<div class="t" style="left:1684px;top:1333.0px;font-size:26px;color:#1a1a1a;font-weight:400;"></div>
<div class="t" style="left:2282px;top:1333.0px;font-size:26px;color:#1a1a1a;font-weight:400;">(Tabit Support) Bar Azenkot</div>
<div class="r" style="left:635px;top:1381px;width:2142px;height:2px;background:#e3e6ea;"></div>
<div class="t" style="left:649px;top:1407.0px;font-size:26px;color:#1a1a1a;font-weight:400;">03/25/2025 5:43:17 AM</div>
<div class="t" style="left:1063px;top:1407.0px;font-size:26px;color:#1a1a1a;font-weight:400;">Bill Printed</div>
<div class="t" style="left:1684px;top:1407.0px;font-size:26px;color:#1a1a1a;font-weight:400;"></div>
<div class="t" style="left:2282px;top:1407.0px;font-size:26px;color:#1a1a1a;font-weight:400;">(Tabit Support) Bar Azenkot</div>
<div class="r" style="left:635px;top:1455px;width:2142px;height:2px;background:#e3e6ea;"></div>
<div class="t" style="left:649px;top:1481.0px;font-size:26px;color:#1a1a1a;font-weight:400;">03/25/2025 5:44:42 AM</div>
<div class="t" style="left:1063px;top:1481.0px;font-size:26px;color:#1a1a1a;font-weight:400;">Fired Alcoholic Items</div>
<div class="t" style="left:1684px;top:1481.0px;font-size:26px;color:#1a1a1a;font-weight:400;">Alcohol Serving Limit Exceeded</div>
<div class="t" style="left:2282px;top:1481.0px;font-size:26px;color:#1a1a1a;font-weight:400;">(Tabit Support) Bar Azenkot</div>
<div class="r" style="left:635px;top:1529px;width:2142px;height:2px;background:#e3e6ea;"></div>
<div class="t" style="left:649px;top:1555.0px;font-size:26px;color:#1a1a1a;font-weight:400;">03/25/2025 5:44:42 AM</div>
<div class="t" style="left:1063px;top:1555.0px;font-size:26px;color:#1a1a1a;font-weight:400;">Fired Other</div>
<div class="t" style="left:1684px;top:1555.0px;font-size:26px;color:#1a1a1a;font-weight:400;">Alcohol 4</div>
<div class="t" style="left:2282px;top:1555.0px;font-size:26px;color:#1a1a1a;font-weight:400;">(Tabit Support) Bar Azenkot</div>
<div class="r" style="left:635px;top:1603px;width:2142px;height:2px;background:#e3e6ea;"></div>
<div class="r" style="left:604px;top:1458px;width:2032px;height:88px;background:transparent;border:14px solid #5bc0c0;box-sizing:border-box"></div>
<div class="t" style="left:612px;top:1753.9px;font-size:32px;color:#4a4d52;font-weight:400;">Items</div>
<svg class="r" style="left:2786px;top:1762px" width="24" height="18" viewBox="0 0 24 18"><path d="M3 3 L12 13 L21 3" stroke="#2a2e36" stroke-width="2.5" fill="none"/></svg>
<div class="r" style="left:0px;top:1850px;width:3345px;height:1px;background:#000;"></div>
</body></html>
